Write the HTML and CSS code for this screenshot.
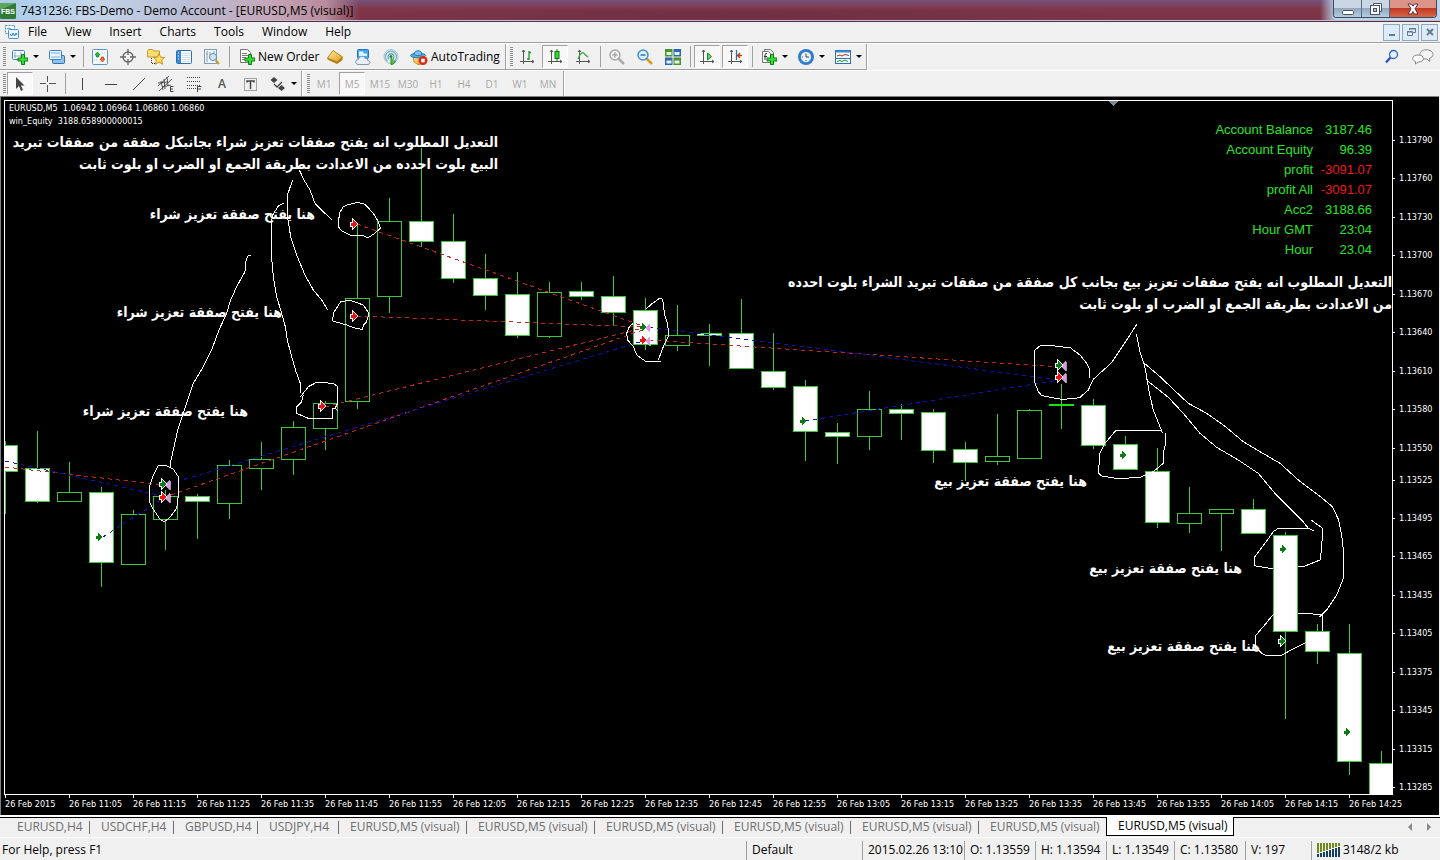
FILE: index.html
```html
<!DOCTYPE html>
<html lang="en">
<head>
<meta charset="utf-8">
<title>7431236: FBS-Demo - Demo Account - [EURUSD,M5 (visual)]</title>
<link rel="stylesheet" href="styles.css">
</head>
<body>
<svg class="defs" aria-hidden="true">
  <defs>
    <linearGradient id="gold" x1="0" y1="0" x2="1" y2="1"><stop offset="0" stop-color="#fff0a0"/><stop offset="1" stop-color="#d89a18"/></linearGradient>
    <linearGradient id="sky" x1="0" y1="0" x2="0" y2="1"><stop offset="0" stop-color="#d8f0ff"/><stop offset="1" stop-color="#4a98dc"/></linearGradient>
    <g id="plus"><path d="M9.500 5.500h3v3.500h3.500v3h-3.500v3.500h-3V12H6V9h3.500z" fill="#35dd35" stroke="#0a7d12"/></g>
    <g id="axes"><path d="M4.500 1v14M1 12.500h14M3 3l1.500-2L6 3M13 11l2 1.500-2 1.500" fill="none" stroke="#555"/></g>
    <path id="arrow" d="M-3 -1.500H-1V-4L3 0L-1 4V1.500H-3z"/>
    <path id="exit" d="M4 -4.500V4.500L-1 0z" fill="#dd9ae2" stroke="#fff" stroke-width=".6"/>
  </defs>
</svg>
<div class="window">
  <header class="titlebar">
    <svg class="logo" viewBox="0 0 16 16" width="16" height="16"><rect width="16" height="16" rx="1" fill="#2f7a35"/><path d="M0 0h16L0 7z" fill="#62a45e"/><text x="8" y="11" class="logo-text">FBS</text></svg>
    <h1 class="title">7431236: FBS-Demo - Demo Account - [EURUSD,M5 (visual)]</h1>
    <div class="caption">
      <button class="cap" aria-label="Minimize"><svg width="12" height="12" viewBox="0 0 12 12"><rect x=".5" y="7.500" width="11" height="4" rx="1" fill="#fff" stroke="#4a5260"/></svg></button>
      <button class="cap" aria-label="Restore"><svg width="12" height="12" viewBox="0 0 12 12"><path d="M3.500 3V.5h8v8H9" fill="#fff" stroke="#4a5260"/><rect x=".5" y="2.500" width="9" height="9" fill="#fff" stroke="#4a5260"/><rect x="3.500" y="5.500" width="3" height="3" fill="#b8c4d0" stroke="#4a5260"/></svg></button>
      <button class="cap cap-close" aria-label="Close"><svg width="12" height="12" viewBox="0 0 12 12"><path d="M1 1h3.500L6 3.200 7.500 1H11L8 5.800 11 11H7.500L6 8.500 4.500 11H1L4 5.800z" fill="#fff" stroke="#5a3038"/></svg></button>
    </div>
  </header>

  <nav class="menubar">
    <svg width="14" height="14" viewBox="0 0 14 14"><rect x=".5" y=".5" width="9" height="8" fill="#fff" stroke="#4a90d0" stroke-dasharray="2 1"/><path d="M2 4l2-1 2 1" stroke="#4a90d0" fill="none"/><rect x="3.500" y="4.500" width="10" height="9" rx="1" fill="#e8f4ff" stroke="#4a90d0"/><path d="M5 9l1.500 2L8 8l1.500 3L11 8l1 2" stroke="#2f78c0" fill="none"/></svg>
    <button class="menu">File</button><button class="menu">View</button><button class="menu">Insert</button><button class="menu">Charts</button><button class="menu">Tools</button><button class="menu">Window</button><button class="menu">Help</button>
    <div class="mdi">
      <button class="mdi-btn" aria-label="Minimize chart"><svg width="10" height="10" viewBox="0 0 10 10"><path d="M2 8h6" stroke="#66798c" stroke-width="2"/></svg></button>
      <button class="mdi-btn" aria-label="Restore chart"><svg width="10" height="10" viewBox="0 0 10 10"><path d="M3.500 3V1.500h6v4H7M3 2h7" fill="none" stroke="#66798c"/><path d="M1.500 4.500h5v4h-5zM1 5h6" fill="none" stroke="#66798c"/></svg></button>
      <button class="mdi-btn" aria-label="Close chart"><svg width="10" height="10" viewBox="0 0 10 10"><path d="M2 2l6 6M8 2L2 8" stroke="#66798c" stroke-width="2"/></svg></button>
    </div>
  </nav>

  <div class="toolrow">
    <div class="bar">
      <i class="grip"></i>
      <button class="tool drop" aria-label="New chart"><svg viewBox="0 0 16 16"><rect x=".5" y="1.500" width="12" height="9" rx="1" fill="#fff" stroke="#3c7fc0"/><path d="M3 3v6M2 7h8M9 3v5" stroke="#6a8fb5" stroke-width=".8"/><use href="#plus"/></svg></button>
      <button class="tool drop" aria-label="Profiles"><svg viewBox="0 0 16 16"><rect x="3.500" y="6.500" width="12" height="8" rx="1" fill="#8fc0ee" stroke="#2f6fae"/><rect x=".5" y="1.500" width="12" height="9" rx="1" fill="#e8f3ff" stroke="#3c7fc0"/><path d="M2 4h9M2 8h9" stroke="#7fb0e0"/></svg></button>
      <i class="sep"></i>
      <button class="tool" aria-label="Market Watch"><svg viewBox="0 0 16 16"><rect x=".5" y=".5" width="15" height="15" rx="1" fill="#f4f9ff" stroke="#5a94cc"/><path d="M5.500 3L8 6H6.500v2h-2V6H3z" fill="#2cc22c" stroke="#0a7d12" stroke-width=".7"/><path d="M10.500 13L13 10h-1.500V8h-2v2H8z" fill="#ff7038" stroke="#c03010" stroke-width=".7"/><path d="M10 4h4M2 11h4" stroke="#a8c4e0" stroke-dasharray="1 1"/></svg></button>
      <button class="tool" aria-label="Data Window"><svg viewBox="0 0 16 16"><circle cx="8" cy="8" r="5" fill="none" stroke="#666" stroke-width="1.300"/><path d="M8 0v6M8 10v6M0 8h6M10 8h6" stroke="#666" stroke-width="1.300"/></svg></button>
      <button class="tool" aria-label="Navigator"><svg viewBox="0 0 18 16" class="w18"><path d="M.5 2.500l1-2h4l1 1.500h6v6H.5z" fill="#f8dd70" stroke="#c49a2a"/><path d="M4.500 9v6M5 14.500h3" stroke="#333" stroke-dasharray="1 1"/><path d="M12 4.500l1.700 3.700 3.800.3-2.900 2.600 1 4.200-3.600-2.200-3.600 2.200 1-4.200L6.500 8.500l3.800-.3z" fill="#ffe060" stroke="#c89020"/></svg></button>
      <button class="tool" aria-label="Terminal"><svg viewBox="0 0 16 16"><rect x=".5" y="1.500" width="15" height="13" rx="1" fill="#fff" stroke="#2f6fae"/><path d="M1 2h4v12H1z" fill="#3a86d8"/><path d="M2 4h1M2 7h1M2 10h1" stroke="#fff"/><path d="M6 4.500h8M6 6.500h8M6 8.500h8M6 10.500h8M6 12.500h8" stroke="#bcd4ee" stroke-width=".7"/></svg></button>
      <button class="tool" aria-label="Strategy Tester"><svg viewBox="0 0 16 16"><rect x=".5" y=".5" width="12" height="14" fill="#f2f7fc" stroke="#7a9cc0"/><path d="M3 2v11M6 3v7M10 2v6M2 5h2M5 8h3" stroke="#999"/><circle cx="9" cy="8" r="3.500" fill="#cfe8fb" fill-opacity=".9" stroke="#5a90c0"/><path d="M11.500 11l3.500 4" stroke="#d09a28" stroke-width="2"/></svg></button>
      <i class="sep"></i>
      <button class="tool labelled"><svg viewBox="0 0 16 16"><path d="M1.500.5h7l3 3v10h-10z" fill="#fff" stroke="#777"/><path d="M3 4.500h5M3 6.500h6M3 8.500h4M3 10.500h3" stroke="#777"/><use href="#plus"/></svg>New Order</button>
      <button class="tool" aria-label="MetaEditor"><svg viewBox="0 0 16 16"><path d="M.5 9L6 1.500 15.500 8v3L10 15 .5 10.500z" fill="#b87a14"/><path d="M.5 9L6 1.500 15.500 8 10 13z" fill="url(#gold)" stroke="#b07810" stroke-width=".8"/></svg></button>
      <button class="tool" aria-label="Virtual Hosting"><svg viewBox="0 0 16 16"><rect x="2.500" y=".5" width="11" height="9" rx="1" fill="#46a4f0" stroke="#1c74c0"/><path d="M4 2.500h4l1 2h3v2.500H4z" fill="#dff2ff"/><path d="M3 15.500a2.500 2.500 0 0 1 .5-5A3.500 3.500 0 0 1 10 9a3 3 0 0 1 2.800 2.500 2 2 0 0 1 .2 4z" fill="#e8eef6" stroke="#7c98b8"/></svg></button>
      <button class="tool" aria-label="Signals"><svg viewBox="0 0 16 16"><circle cx="8" cy="7.500" r="7" fill="#e8f4f4" stroke="#9cc0c8"/><path d="M4.500 12a5.500 5.500 0 1 1 7 0" fill="none" stroke="#82b4cc" stroke-width="1.300"/><path d="M6 10a3 3 0 1 1 4 0" fill="none" stroke="#6aa8bc" stroke-width="1.300"/><circle cx="8" cy="7.500" r="1.500" fill="#24863c"/><path d="M8 8v7.500c3 0 4-2 4.500-3.500" fill="#5cbc50" stroke="#2c8a34"/></svg></button>
      <button class="tool labelled auto"><svg viewBox="0 0 18 16" class="w18"><path d="M3 7h11l-2 8-4 .5L4 13z" fill="url(#gold)" stroke="#c09020"/><ellipse cx="8" cy="6.500" rx="7.500" ry="2.300" fill="#58aee4" stroke="#2878b0"/><path d="M4 5.500C4 .5 12 .5 12 5.500 10 7 6 7 4 5.500z" fill="#7cc4f0" stroke="#2878b0"/><circle cx="13" cy="11.500" r="4.500" fill="#e02818"/><rect x="11.200" y="9.700" width="3.600" height="3.600" fill="#fff"/></svg>AutoTrading</button>
    </div>
    <div class="bar">
      <i class="grip"></i>
      <button class="tool" aria-label="Bar Chart"><svg viewBox="0 0 16 16"><use href="#axes"/><path d="M10 2v9M8 10h2M10 3.500h2" stroke="#1c9a2c" stroke-width="1.300"/></svg></button>
      <button class="tool on" aria-label="Candlesticks"><svg viewBox="0 0 16 16"><use href="#axes"/><path d="M10 0v12" stroke="#0a7d12"/><rect x="8" y="2.500" width="4" height="7" fill="#35d835" stroke="#0a7d12"/></svg></button>
      <button class="tool" aria-label="Line Chart"><svg viewBox="0 0 16 16"><use href="#axes"/><path d="M3 10C5 4 8 2 10 5.500L13 8" fill="none" stroke="#3aa648" stroke-width="1.300"/></svg></button>
      <i class="sep"></i>
      <button class="tool" aria-label="Zoom In" disabled><svg viewBox="0 0 16 16"><path d="M9 9l6 6" stroke="#aaa" stroke-width="2.500"/><circle cx="6" cy="6" r="5" fill="#eee" stroke="#aaa" stroke-width="1.500"/><path d="M3.500 6h5M6 3.500v5" stroke="#aaa" stroke-width="1.500"/></svg></button>
      <button class="tool" aria-label="Zoom Out"><svg viewBox="0 0 16 16"><path d="M9.500 9.500l5.500 5.500" stroke="#d8a020" stroke-width="2.500"/><circle cx="6" cy="6" r="5" fill="#d8f0ff" stroke="#4a90cc" stroke-width="1.500"/><path d="M3.500 6h5" stroke="#2c78bc" stroke-width="1.500"/></svg></button>
      <button class="tool" aria-label="Tile Windows"><svg viewBox="0 0 16 16"><path d="M0 0h7.500v7.500H0zM8.500 8.500H16V16H8.500z" fill="#48942c"/><path d="M8.500 0H16v7.500H8.500zM0 8.500h7.500V16H0z" fill="#2c66b8"/><path d="M1.500 3h5v3h-5zM9.500 3h5v3h-5zM1.500 11.500h5v3h-5zM9.500 11.500h5v3h-5z" fill="#e8f2e4"/></svg></button>
      <i class="sep"></i>
      <button class="tool on" aria-label="Auto Scroll"><svg viewBox="0 0 16 16"><use href="#axes"/><path d="M8.500 4l4 3.500L8.500 11z" fill="#6ad86a" stroke="#128a22"/></svg></button>
      <button class="tool on" aria-label="Chart Shift"><svg viewBox="0 0 16 16"><use href="#axes"/><path d="M9.500 1v10" stroke="#2c6ca8" stroke-width="1.300"/><path d="M15 6.500h-4M13 4l-2.500 2.500L13 9" fill="none" stroke="#b83c10" stroke-width="1.300"/></svg></button>
      <i class="sep"></i>
      <button class="tool drop" aria-label="Indicators"><svg viewBox="0 0 16 16"><path d="M3.500 2.500V.5h6l3 3v9h-2" fill="#eee" stroke="#777"/><path d="M1.500 2.500h6l2 2v9h-8z" fill="#fff" stroke="#777"/><path d="M4 11V6q0-2 2-1.500M3 7.500h3" fill="none" stroke="#333"/><use href="#plus"/></svg></button>
      <button class="tool drop" aria-label="Periods"><svg viewBox="0 0 16 16"><circle cx="8" cy="8" r="8" fill="#2c7cd0"/><circle cx="8" cy="8" r="5.500" fill="#e8f4ff" stroke="#1a5aa0" stroke-width=".6"/><path d="M8 4.500V8h3M4 8h1M8 12v-1" fill="none" stroke="#444"/></svg></button>
      <button class="tool drop" aria-label="Templates"><svg viewBox="0 0 16 16"><rect x=".5" y="1.500" width="15" height="13" fill="#f4f9ff" stroke="#2f6fae"/><path d="M1 2.500h14" stroke="#3a86d8" stroke-width="2"/><path d="M2 7l3-1 2 1 3-1.500 4 1" fill="none" stroke="#b03020"/><path d="M1 9.500h14" stroke="#2f6fae"/><path d="M2 12.500l3-1 2 1 3-1.500 3 1.500" fill="none" stroke="#1c9a2c"/></svg></button>
    </div>
    <div class="right-tools">
      <button class="tool" aria-label="Search"><svg viewBox="0 0 16 16"><circle cx="9.500" cy="5.500" r="4" fill="#e8f2ff" stroke="#2c64d0" stroke-width="1.300"/><path d="M6.500 8.500L2 13.500" stroke="#2450b8" stroke-width="2.200"/></svg></button>
      <button class="tool chat" aria-label="Chat"><svg viewBox="0 0 22 16" class="w22"><path d="M14 .8c4 0 7 1.800 7 4.600 0 2-1.500 3.300-3.500 4l.5 3-3.500-2.400C10 10 8 8 8 5.400 8 2.600 10.500.8 14 .8z" fill="#f4f4f4" stroke="#888"/><path d="M6 6c3 0 5.500 1.300 5.500 3.500S9.500 13 6 13l-2.500 2V12.500C2 12 .7 11 .7 9.500.7 7.300 3 6 6 6z" fill="#fff" stroke="#888"/></svg></button>
    </div>
  </div>

  <div class="toolrow second">
    <div class="bar">
      <i class="grip"></i>
      <button class="tool on" aria-label="Cursor"><svg viewBox="0 0 16 16"><path d="M4 1v12l3-3 2 5 2-1-2-4.500h3.500z" fill="#444"/></svg></button>
      <button class="tool" aria-label="Crosshair"><svg viewBox="0 0 16 16"><path d="M7.500 0v6M7.500 9v7M0 7.500h6M9 7.500h7" stroke="#555"/></svg></button>
      <i class="sep"></i>
      <button class="tool" aria-label="Vertical Line"><svg viewBox="0 0 16 16"><path d="M8.500 2v12" stroke="#444"/></svg></button>
      <button class="tool" aria-label="Horizontal Line"><svg viewBox="0 0 16 16"><path d="M3 8.500h12" stroke="#444"/></svg></button>
      <button class="tool" aria-label="Trendline"><svg viewBox="0 0 16 16"><path d="M3 14L15 2" stroke="#444"/></svg></button>
      <button class="tool" aria-label="Equidistant Channel"><svg viewBox="0 0 16 16"><path d="M0 10L11 0M1 15L14 3M3 5l2 9M6 3l1 10M9 1l1 9M0 7l9-1M4 11l9-2" stroke="#444" stroke-width=".9" fill="none"/><path d="M15.500 10.500h-3v5h3M13 13h2" stroke="#444" fill="none"/></svg></button>
      <button class="tool" aria-label="Fibonacci"><svg viewBox="0 0 16 16"><path d="M1 1.500h14M1 5.500h14M1 9.500h14M1 12.500h9" stroke="#444" stroke-dasharray="1 1"/><path d="M15.500 10.500h-4V16M12 13h3" stroke="#444" fill="none"/></svg></button>
      <button class="tool letter">A</button>
      <button class="tool" aria-label="Text Label"><svg viewBox="0 0 16 16"><rect x="2.500" y="2.500" width="12" height="12" fill="none" stroke="#555" stroke-dasharray="1 1"/><path d="M5 6.500V5h7v1.500M8.500 5v8" stroke="#444" stroke-width="1.500" fill="none"/></svg></button>
      <button class="tool drop" aria-label="Arrows"><svg viewBox="0 0 16 16"><path d="M4 1l3.500 3L4 7 .5 4zM11.500 9l3.500 3-3.500 3L8 12z" fill="#444"/><path d="M4 8l3 3 5-5" stroke="#444" stroke-width="1.300" fill="none"/></svg></button>
    </div>
    <div class="bar frames">
      <i class="grip"></i>
      <button class="tool tf">M1</button><button class="tool tf on">M5</button><button class="tool tf">M15</button><button class="tool tf">M30</button><button class="tool tf">H1</button><button class="tool tf">H4</button><button class="tool tf">D1</button><button class="tool tf">W1</button><button class="tool tf">MN</button>
    </div>
  </div>

  <main class="chart">
    <div class="plot">
      <svg class="canvas" viewBox="5 101 1387 693" width="1387" height="693">
        <g id="candles"></g>
        <path d="M1108.500 101h10l-5 5z" fill="#7d8a96"/>
        <g class="trade sell">
          <path d="M5 467L163 485M171 495L643 330M325 407L643 328M357 316L643 327M357 224L643 326M649 340L1059 367"/>
        </g>
        <g class="trade buy">
          <path d="M5 461L163 496M103 537L165 497M169 484L643 341M649 327L1061 380M805 421L1059 380"/>
        </g>
        <g id="markers"></g>
        <g class="ink" transform="translate(0 120) scale(.33333)">
          <path d="M898 150L912 180L930 210L945 250L975 280L995 298"/>
          <path d="M878 180L864 220L864 300L872 350L890 405L915 465L940 510L965 540L983 570"/>
          <path d="M851 250L835 258L818 285L814 310L814 405L820 470L830 530L845 580L856 620L862 660L875 710L888 755L901 790L903 818"/>
          <path d="M752 408L744 408L737 425L735 455L710 500L690 545L680 580L657 630L635 690L610 740L580 790L560 850L533 930L520 990L513 1020L512 1042"/>
          <path d="M1040 255L1072 247L1095 253L1120 280L1135 305L1141 325L1120 343L1103 354L1090 347L1050 345L1025 333L1015 320L1018 280L1030 260z"/>
          <path d="M1022 545L1050 541L1090 555L1107 580L1100 605L1090 615L1088 628L1070 626L1040 615L998 603L1000 580z"/>
          <path d="M902 830L925 800L950 787L1000 790L1013 800L1013 850L1005 865L1013 872M1005 865H998V895H925L890 880V860L905 845L910 825"/>
          <path d="M475 1036L497 1036L520 1048L535 1070L537 1110L530 1165L510 1192L493 1205L480 1198L455 1160L448 1145L448 1100L460 1065z"/>
        </g>
        <g class="ink" transform="translate(380 180) scale(.33333)">
          <path d="M797 388L815 372L838 355H845L850 368L853 400L862 430L867 465L850 500L835 540M842 544H797L770 525L760 500L743 480L740 460L748 440L760 430"/>
        </g>
        <g class="ink" transform="translate(760 260) scale(.33333)">
          <path d="M990 353V330L980 310L960 285L932 264L885 258L842 256L825 270L823 300V365L835 395L845 407L905 418L940 416L960 412L985 390L1000 358L1025 335L1055 308L1080 270L1110 225L1130 193"/>
          <path d="M1129 222L1140 275L1153 315L1160 350L1168 400L1180 450L1202 505L1208 520"/>
          <path d="M1202 511H1068L1035 550L1020 580L1015 638L1025 648L1075 656L1140 652L1180 635L1210 610L1212 570L1217 550V520"/>
        </g>
        <g class="ink" transform="translate(1060 480) scale(.33333)">
          <path d="M250 -350L258 -346L300 -310L340 -272L385 -230L440 -200L490 -165L550 -115L600 -85L660 -50L715 0L775 45L815 78L822 90L836 120L845 165L851 220L850 295L830 345L800 390L778 412"/>
          <path d="M258 -305L262 -298L325 -248L370 -200L420 -140L470 -98L535 -60L595 -20L645 40L700 95L725 120L745 145"/>
          <path d="M762 152L745 145H655L640 155L615 190L585 230L584 257L610 262L640 266M713 260L735 258L780 240L785 205L788 145L753 120"/>
          <path d="M640 403L610 440L588 465V500L605 520L620 528H660L690 512L740 487M713 400H740L788 405L787 454"/>
        </g>
        <g class="notes">
          <text x="498" y="147">التعديل المطلوب انه يفتح صفقات تعزيز شراء بجانبكل صفقة من صفقات تبريد</text>
          <text x="498" y="169">البيع بلوت احدده من الاعدادت بطريقة الجمع او الضرب او بلوت ثابت</text>
          <text x="315" y="219">هنا يفتح صفقة تعزيز شراء</text>
          <text x="282" y="317">هنا يفتح صفقة تعزيز شراء</text>
          <text x="248" y="416">هنا يفتح صفقة تعزيز شراء</text>
          <text x="1392" y="287">التعديل المطلوب انه يفتح صفقات تعزيز بيع بجانب كل صفقة من صفقات تبريد الشراء بلوت احدده</text>
          <text x="1392" y="309">من الاعدادت بطريقة الجمع او الضرب او بلوت ثابت</text>
          <text x="1087" y="486">هنا يفتح صفقة تعزيز بيع</text>
          <text x="1242" y="573">هنا يفتح صفقة تعزيز بيع</text>
          <text x="1260" y="651">هنا يفتح صفقة تعزيز بيع</text>
        </g>
      </svg>
      <div class="quote"><p>EURUSD,M5&nbsp; 1.06942 1.06964 1.06860 1.06860</p><p>win_Equity&nbsp; 3188.658900000015</p></div>
      <table class="account">
        <tr><th scope="row">Account Balance</th><td>3187.46</td></tr>
        <tr><th scope="row">Account Equity</th><td>96.39</td></tr>
        <tr><th scope="row">profit</th><td class="loss">-3091.07</td></tr>
        <tr><th scope="row">profit All</th><td class="loss">-3091.07</td></tr>
        <tr><th scope="row">Acc2</th><td>3188.66</td></tr>
        <tr><th scope="row">Hour GMT</th><td>23:04</td></tr>
        <tr><th scope="row">Hour</th><td>23.04</td></tr>
      </table>
    </div>
    <div class="prices" id="prices"></div>
    <div class="times" id="times"></div>
  </main>

  <div class="tabs">
    <button class="tab">EURUSD,H4</button><button class="tab">USDCHF,H4</button><button class="tab">GBPUSD,H4</button><button class="tab">USDJPY,H4</button><button class="tab visual">EURUSD,M5 (visual)</button><button class="tab visual">EURUSD,M5 (visual)</button><button class="tab visual">EURUSD,M5 (visual)</button><button class="tab visual">EURUSD,M5 (visual)</button><button class="tab visual">EURUSD,M5 (visual)</button><button class="tab visual last">EURUSD,M5 (visual)</button><button class="tab visual active">EURUSD,M5 (visual)</button>
    <div class="scroll"><button aria-label="Scroll tabs left"><svg width="4" height="8" viewBox="0 0 4 8"><path d="M4 0v8L0 4z" fill="#888"/></svg></button><button aria-label="Scroll tabs right"><svg width="4" height="8" viewBox="0 0 4 8"><path d="M0 0v8l4-4z" fill="#888"/></svg></button></div>
  </div>

  <footer class="status">
    <span class="help">For Help, press F1</span>
    <span class="cell profile">Default</span>
    <span class="cell date">2015.02.26 13:10</span>
    <span class="cell">O: 1.13559</span>
    <span class="cell">H: 1.13594</span>
    <span class="cell narrow">L: 1.13549</span>
    <span class="cell">C: 1.13580</span>
    <span class="cell volume">V: 197</span>
    <span class="cell traffic"><svg width="23" height="14" viewBox="0 0 23 14"><path d="M1 0v10M4 0v9M7 0v8M10 0v7M13 0v6M16 0v5M19 0v4M22 0v3" stroke="#6f8a1c" stroke-width="2"/><path d="M1 11v3M4 10v4M7 9v5M10 8v6M13 7v7M16 6v8M19 5v9M22 4v10" stroke="#123f5c" stroke-width="2"/></svg>3148/2 kb</span>
  </footer>
</div>
<script src="chart.js"></script>
</body>
</html>
```
FILE: styles.css
```css
* { box-sizing: border-box; }
body { margin: 0; background: #f0f0f0; color: #000; font: 12px/16px "Open Sans", "Noto Sans", sans-serif; }
button { margin: 0; padding: 0; border: 0; background: none; color: inherit; font: inherit; }
h1, p { margin: 0; }
svg { display: block; flex: none; }
.defs { position: absolute; width: 0; height: 0; }
.window { display: flex; flex-direction: column; height: 100vh; overflow: hidden; }

.titlebar { display: flex; align-items: center; flex: none; height: 22px; border-bottom: 1px solid #4a3348; box-shadow: inset 0 -1px #cdb8cc;
  background: linear-gradient(90deg, #a9cdeb 0, #c3d5ea 90px, #b9bfd6 180px, #c4a7b8 270px, #b98c9d 325px, transparent 360px, transparent calc(100% - 120px), #b9d4ec calc(100% - 104px)), radial-gradient(ellipse 400px 8px at 52% 70%, #6c3043, transparent), linear-gradient(#74507a, #7f3648 45%, #7c3446 85%, #6e3a56); }
.logo-text { font: bold 7px "Liberation Sans", sans-serif; fill: #fff; text-anchor: middle; }
.title { flex: 1; margin-left: 5px; font-size: 12px; font-weight: 400; white-space: nowrap; }
.caption { display: flex; align-self: flex-start; height: 18px; margin-right: 3px; border: 1px solid #3e4a5c; border-top: 0; border-radius: 0 0 4px 4px; overflow: hidden; }
.cap { display: flex; align-items: center; justify-content: center; width: 28px; border-right: 1px solid #5a6a7e; background: linear-gradient(#c9d6e4 45%, #93a8c0 50%, #b4cbe0); }
.cap-close { width: 46px; border: 0; background: linear-gradient(#dc9488 45%, #c03a24 50%, #d8684a); }

.menubar { display: flex; align-items: center; flex: none; height: 21px; padding: 0 2px 0 5px; border-bottom: 1px solid #a0a0a0; }
.menu { padding: 0 9px; }
.mdi { display: flex; gap: 2px; margin-left: auto; }
.mdi-btn { display: flex; align-items: center; justify-content: center; width: 17px; height: 17px; border: 1px solid #92a6ba; background: #dcebf9; }

.toolrow { display: flex; flex: none; height: 27px; border-top: 1px solid #fff; }
.toolrow.second { height: 26px; }
.bar { display: flex; align-items: center; padding-left: 3px; border-right: 1px solid #a0a0a0; border-bottom: 1px solid #a0a0a0; box-shadow: 1px 0 #fff; }
.bar + .bar { padding-left: 4px; }
.second .bar { border-bottom: 0; }
.second .frames { padding-left: 5px; padding-right: 1px; }
.grip { width: 3px; height: 20px; background: repeating-linear-gradient(#8c8c8c 0 1px, #f0f0f0 1px 2px); }
.sep { flex: none; width: 6px; height: 21px; background: linear-gradient(#a0a0a0, #a0a0a0) center / 1px 100% no-repeat; }
.tool { display: flex; flex: none; align-items: center; justify-content: center; width: 28px; height: 23px; }
.tool svg { width: 16px; height: 16px; }
.tool svg.w18 { width: 18px; }
.tool svg.w22 { width: 22px; }
.tool.on { border: 1px solid; border-color: #a0a0a0 #fff #fff #a0a0a0; background: #f8f8f8; width: 26px; margin: 0 1px; }
.tool.drop { width: 37px; justify-content: flex-start; padding-left: 6px; gap: 5px; }
.tool.drop::after { content: ""; border: 3px solid transparent; border-top-color: #000; border-bottom: 0; }
.tool.labelled { width: 89px; padding-left: 7px; gap: 3px; justify-content: flex-start; white-space: nowrap; }
.tool.auto { width: 100px; padding-left: 5px; }
.right-tools { display: flex; align-items: center; margin-left: auto; gap: 3px; padding-right: 3px; }
.letter { color: #555; font-weight: 600; }
.tf { color: #a8a8a8; font-size: 10px; }

.chart { display: grid; grid-template-columns: 1fr 45px; grid-template-rows: 1fr 20px; flex: 1; min-height: 0; margin-right: 1px; padding: 3px 1px 0 4px; border: solid #808080; border-width: 1px 0 0 1px; background: #000; color: #fff; font: 9px/12px "DejaVu Sans Condensed", "DejaVu Sans", sans-serif; }
.plot { position: relative; overflow: hidden; min-width: 0; min-height: 0; border: 1px solid #fff; margin-left: -1px; }
.canvas { shape-rendering: crispEdges; }
.candle { stroke: #3cc83c; fill: #000; }
.candle.down { fill: #fff; }
.doji { stroke: #12e412; stroke-width: 2; }
.trade path { fill: none; stroke-dasharray: 4 4; }
.sell { stroke: #c0281c; }
.buy { stroke: #1010b4; }
.ink path { fill: none; stroke: #fff; vector-effect: non-scaling-stroke; }
.notes text { direction: rtl; text-anchor: start; fill: #fff; font: bold 14px "DejaVu Sans Condensed", "DejaVu Sans", sans-serif; }
.entry-buy { fill: #0a7a14; }
.entry-sell { fill: #f01010; }
.lit { stroke: #fff; stroke-width: 2; paint-order: stroke; }
.quote { position: absolute; left: 4px; top: 1px; line-height: 13px; }
.account { position: absolute; right: 20px; top: 19px; border-collapse: collapse; color: #2ae42a; font: 13px/20px "Liberation Sans", Arial, sans-serif; text-align: right; }
.account th { padding: 0; font-weight: 400; text-align: right; }
.account td { width: 59px; padding: 0; }
.account .loss { color: #f01818; }
.prices { display: flex; flex-direction: column; padding: 34px 0 2px; }
.price { flex: 30 0 0; display: flex; align-items: flex-start; gap: 4px; white-space: nowrap; }
.price.short { flex-grow: 25; }
.price:last-child { flex: none; }
.price::before { content: ""; width: 2px; height: 1px; margin-top: 6px; background: #fff; }
.times { grid-column: 1 / 3; display: grid; grid-template-columns: repeat(22, 64px); overflow: hidden; white-space: nowrap; }
.time::before { content: ""; display: block; width: 1px; height: 3px; background: #fff; }

.tabs { display: flex; flex: none; height: 23px; border-top: 2px solid #fff; box-shadow: inset 0 1px #000; padding-left: 5px; color: #6e6e6e; border-bottom: 1px solid #fff; }
.tab { position: relative; width: 84px; padding-left: 12px; text-align: left; white-space: nowrap; height: 19px; }
.tab::after { content: ""; position: absolute; right: -1px; top: 4px; width: 1px; height: 13px; background: #6e6e6e; }
.tab.visual { width: 128px; }
.tab:nth-child(4) { width: 81px; }
.tab.last::after, .tab.active::after { display: none; }
.tab.active { border: 1px solid #000; border-top: 0; background: #fff; color: #000; padding-left: 11px; }
.scroll { display: flex; gap: 15px; margin-left: auto; padding-right: 9px; }

.status { display: flex; align-items: center; flex: none; height: 22px; padding: 2px 0 0 2px; white-space: nowrap; }
.help { flex: 1; }
.cell { display: flex; align-items: center; gap: 3px; width: 71px; height: 19px; padding-left: 5px; border-left: 1px solid #a0a0a0; }
.profile { width: 116px; }
.date { width: 102px; }
.narrow { width: 68px; }
.volume { width: 66px; }
.traffic { width: 129px; }
```
FILE: chart.js
```js
const NS = "http://www.w3.org/2000/svg";
// [body top, body bottom, high, low, kind]: kind 0 rising, 1 falling, 2 doji
const candles = [
  [445,471,441,514,1],[468,501,431,503,1],[492,501,462,501,0],[492,562,487,587,1],[514,564,510,564,0],
  [496,519,490,550,0],[496,501,494,539,1],[465,503,460,519,0],[459,468,442,490,0],[427,459,421,475,0],
  [403,428,401,450,0],[298,401,224,409,0],[221,296,198,313,0],[221,241,148,247,1],[241,278,214,283,1],
  [278,295,254,310,1],[294,335,272,338,1],[292,336,282,338,0],[291,296,282,300,1],[296,312,276,325,1],
  [310,344,298,350,1],[335,345,305,351,0],[333,335,324,366,1],[333,368,299,368,1],[371,387,333,390,1],
  [386,431,380,461,1],[432,436,423,464,1],[409,436,391,450,0],[409,413,404,440,1],[412,450,409,463,1],
  [449,462,442,481,1],[456,461,414,465,0],[410,458,409,458,0],[404,405,384,429,2],[405,445,399,449,1],
  [444,469,436,469,1],[471,522,448,528,1],[513,523,487,533,0],[509,513,509,551,0],[509,533,499,533,1],
  [535,631,532,719,1],[631,651,624,664,1],[653,761,624,775,1],[763,820,751,820,1]
];
function add(parent, name, attrs) {
  const el = document.createElementNS(NS, name);
  for (const key in attrs) el.setAttribute(key, attrs[key]);
  parent.appendChild(el);
}
const layer = document.getElementById("candles");
candles.forEach(([top, bottom, high, low, kind], i) => {
  const x = 5 + i * 32;
  add(layer, "path", { class: "candle", d: `M${x + .5} ${high}V${low}` });
  if (kind === 2) add(layer, "path", { class: "doji", d: `M${x - 12} ${bottom}h25` });
  else add(layer, "rect", { class: kind ? "candle down" : "candle", x: x - 11.5, y: top + .5, width: 24, height: bottom - top });
});

// [x, y, side, outlined, closes a position]
const markers = [
  [99,537,"buy",0,0],[163,484,"buy",1,1],[163,497,"sell",1,1],[322,406,"sell",1,0],[354,224,"sell",1,0],
  [354,316,"sell",1,0],[643,327,"buy",0,1],[643,340,"sell",0,1],[803,421,"buy",0,0],[1059,365,"buy",1,1],
  [1059,377,"sell",1,1],[1123,455,"buy",0,0],[1283,549,"buy",0,0],[1282,641,"buy",1,0],[1347,732,"buy",0,0]
];
const pins = document.getElementById("markers");
markers.forEach(([x, y, side, lit, closing]) => {
  if (closing) add(pins, "use", { href: "#exit", x: x + 3, y: y + 1 });
  add(pins, "use", { href: "#arrow", x, y, class: `entry-${side}${lit ? " lit" : ""}` });
});

const prices = [790,760,730,700,670,640,610,580,550,525,495,465,435,405,375,345,315,285];
document.getElementById("prices").innerHTML = prices
  .map(p => `<span class="price${p === 550 ? " short" : ""}">1.13${p}</span>`).join("");

const times = ["2015"];
for (let m = 11 * 60 + 5; m <= 14 * 60 + 25; m += 10) times.push(`${Math.floor(m / 60)}:${String(m % 60).padStart(2, "0")}`);
document.getElementById("times").innerHTML = times.map(t => `<span class="time">26 Feb ${t}</span>`).join("");
```
